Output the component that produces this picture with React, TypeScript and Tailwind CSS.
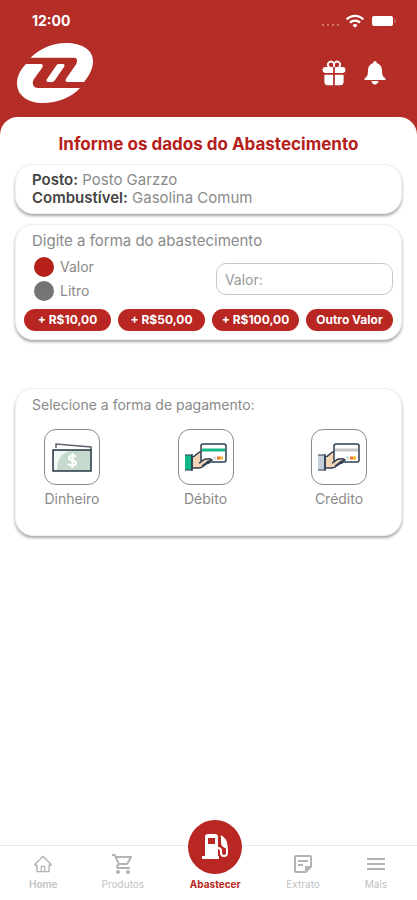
import { useState } from "react";
import { AiOutlineHome } from "react-icons/ai";
import { IoGift } from "react-icons/io5";
import {
  MdMenu,
  MdOutlineShoppingCart,
  MdOutlineStickyNote2,
  MdWifi,
} from "react-icons/md";

const amounts = ["+ R$10,00", "+ R$50,00", "+ R$100,00", "Outro Valor"];

const Logo = () => {
  return (
    <svg viewBox="0 0 76 61" className="h-[61px] w-19" aria-label="Logo" role="img">
      <path
        d="M13.500 15.800C22 7 36 1 49 1c16 0 27 7 27 18 0 8-4 15-9 21H51c-3 0-3-2-1.500-4L59 22.500c2-4 1-6.700-2-6.700Z"
        fill="#fff"
      />
      <path
        d="M9 22h14c3 0 3.500 1.500 2 4l-8 11c-2.500 4-1 9 4 9h42c-8 9-23 15-37 15C10 61 0 53 0 41 0 34 4 27 9 22Z"
        fill="#fff"
      />
      <path
        d="M42 22h4c1.500 0 2 1.500 1 3l-9 13c-1 1.500-2 2-4 2h-3c-1.500 0-2-1.500-1-3l9-13c1-1.500 1.500-2 3-2Z"
        fill="#fff"
      />
    </svg>
  );
};

const StatusBar = () => {
  return (
    <div className="flex h-[42px] items-center justify-between pr-5 pl-8 text-white">
      <span className="text-sm font-bold">12:00</span>
      <div className="flex items-center gap-1">
        <svg viewBox="0 0 20 12" className="h-3 w-5" fill="#d98c88">
          <circle cx="2" cy="10" r="1" />
          <circle cx="7" cy="10" r="1" />
          <circle cx="12" cy="10" r="1" />
          <circle cx="17" cy="10" r="1" />
        </svg>
        <MdWifi className="size-5" />
        <svg viewBox="0 0 26 12" className="h-3 w-7">
          <rect x="2" y="1" width="21" height="10" rx="2" fill="#fff" />
          <path d="M25 4v4" stroke="#d98c88" />
        </svg>
      </div>
    </div>
  );
};

const BellIcon = () => {
  return (
    <svg viewBox="0 0 22 26" className="h-6.5 w-5.5" fill="#fff">
      <path d="M11 1c1 0 1.600.7 1.600 1.900C16.500 4 18 7 18 11c0 4 1 6 3.500 7.500V20H.5v-1.500C3 17 4 15 4 11c0-4 1.500-7 5.400-8.100C9.400 1.700 10 1 11 1Z" />
      <path d="M7.500 21h7c-.4 2-1.700 3.500-3.500 3.500S7.900 23 7.500 21Z" />
    </svg>
  );
};

const CashIcon = () => {
  return (
    <svg viewBox="0 0 42 32" className="h-8 w-[42px]">
      <path d="M5 7V3l35 3v3" fill="#fff" stroke="#59616b" strokeWidth="1.500" />
      <rect x="2" y="9" width="38" height="21" fill="#c5d9cf" />
      <path d="M3 29V10h15C10 13 6 19 6 29Z" fill="#f3f8f5" />
      <rect x="2" y="9" width="38" height="21" fill="none" stroke="#263445" strokeWidth="1.500" />
      <path
        d="M25 16c-1-2-7-2-7 1 0 4 7 1 7 5 0 3-6 3-8 1M21.500 12v15"
        fill="none"
        stroke="#fff"
        strokeWidth="2"
      />
    </svg>
  );
};

const CardIcon = ({ sleeve, stripe }: { sleeve: string; stripe: string }) => {
  return (
    <svg viewBox="0 0 42 32" className="h-8 w-[42px]">
      <path d="M0 14h7v15H0Z" fill={sleeve} />
      <path d="M0 14h7M0 29h7" stroke="#2c3e50" />
      <path
        d="M7 16c4 0 5-6 11-6l7 8-1 4c-4 0-5 5-10 5H7Z"
        fill="#f3d3b5"
        stroke="#2c3e50"
        strokeWidth="1.500"
      />
      <path d="M7 13v17" stroke="#2c3e50" strokeWidth="1.500" />
      <rect x="16" y="3" width="25" height="18" rx="2" fill="#fff" stroke="#2c3e50" strokeWidth="1.500" />
      <path d="M17 9h23" stroke={stripe} strokeWidth="3" />
      <path d="M28 17h3" stroke="#d8dde0" strokeWidth="3" />
      <path d="M32 17h3" stroke="#f0742c" strokeWidth="3" />
      <path d="M35 17h3" stroke="#f5b623" strokeWidth="3" />
      <path
        d="M14 22c3-1 4-4 7-4 2 0 5-1 6 1-2 1-4 1-6 3l-4 3"
        fill="#f3d3b5"
        stroke="#2c3e50"
        strokeWidth="1.500"
      />
    </svg>
  );
};

const PumpIcon = () => {
  return (
    <svg viewBox="0 0 28 28" className="size-7">
      <path
        fill="#fff"
        fillRule="evenodd"
        d="M4 4q0-3 3-3h7q3 0 3 3v19h1v3H1v-3h3Zm3 1v6h7V5Z"
      />
      <path
        d="M17 15q3 0 3 3v2q0 3 3 3t3-3c0-5 0-9-2-13l-4-4"
        fill="none"
        stroke="#fff"
        strokeWidth="2"
      />
      <path d="M20 4l4 4 2 7h-2c-3-1-4-3-4-6Z" fill="#fff" />
    </svg>
  );
};

const payments = [
  { label: "Dinheiro", icon: <CashIcon /> },
  { label: "Débito", icon: <CardIcon sleeve="#12b886" stripe="#12b886" /> },
  { label: "Crédito", icon: <CardIcon sleeve="#c5d0d8" stripe="#c4c8ca" /> },
];

const card = "rounded-[18px] border border-[#f0f0f0] bg-white shadow-[0_2px_3px_rgba(0,0,0,0.35)]";

export default function App() {
  const [mode, setMode] = useState("Valor");

  return (
    <div className="flex min-h-screen flex-col bg-white font-['Inter',sans-serif] text-[#8a8a8a]">
      <header className="bg-[#b42d27] pb-3.5">
        <StatusBar />
        <div className="flex items-center justify-between pr-[31px] pl-[17px]">
          <Logo />
          <div className="flex items-center gap-4">
            <button type="button" aria-label="Presentes" className="text-white">
              <IoGift className="size-7" />
            </button>
            <button type="button" aria-label="Notificações">
              <BellIcon />
            </button>
          </div>
        </div>
      </header>

      <div className="flex flex-1 flex-col bg-[#b42d27]">
        <main className="flex-1 rounded-t-[18px] bg-white px-[15px] pt-[17px]">
          <h1 className="text-center text-[17px] leading-5 font-bold text-[#b5201b]">
            Informe os dados do Abastecimento
          </h1>

          <section className={`${card} mt-2.5 flex flex-col px-4 py-1.5 text-[15px] leading-[18px]`}>
            <p>
              <b className="font-semibold text-[#444]">Posto:</b> Posto Garzzo
            </p>
            <p>
              <b className="font-semibold text-[#444]">Combustível:</b> Gasolina Comum
            </p>
          </section>

          <section className={`${card} mt-2.5 p-2`}>
            <h2 className="px-2 text-[15px] leading-4">Digite a forma do abastecimento</h2>
            <div className="flex items-center justify-between">
              <div className="flex flex-col gap-1 py-2 pl-2.5 text-sm leading-5">
                {["Valor", "Litro"].map((item) => (
                  <label key={item} className="flex items-center gap-1.5">
                    <input
                      type="radio"
                      name="mode"
                      checked={mode === item}
                      onChange={() => setMode(item)}
                      className="size-5 appearance-none rounded-full bg-[#747474] checked:bg-[#b5201b]"
                    />
                    {item}
                  </label>
                ))}
              </div>
              <input
                type="text"
                aria-label="Valor"
                placeholder="Valor:"
                className="h-8 w-[48%] rounded-[10px] border border-[#c8c8c8] px-2 text-sm placeholder:text-[#999]"
              />
            </div>
            <div className="grid grid-cols-4 gap-[7px]">
              {amounts.map((amount) => (
                <button
                  key={amount}
                  type="button"
                  className="h-[22px] rounded-full bg-[#b92722] text-xs font-bold whitespace-nowrap text-white"
                >
                  {amount}
                </button>
              ))}
            </div>
          </section>

          <section className={`${card} mt-12 pt-2 pb-[26px]`}>
            <h2 className="px-4 text-sm leading-4">Selecione a forma de pagamento:</h2>
            <div className="mt-4 flex justify-between pr-[34px] pl-7">
              {payments.map(({ label, icon }) => (
                <button key={label} type="button" className="flex flex-col items-center gap-1">
                  <span className="flex size-14 items-center justify-center rounded-xl border border-[#8a8a8a]">
                    {icon}
                  </span>
                  <span className="text-sm leading-5">{label}</span>
                </button>
              ))}
            </div>
          </section>
        </main>
      </div>

      <nav className="flex items-end justify-between border-t border-[#e8eaea] px-[29px] pb-2.5 text-[10px] leading-3 text-[#c0c2c2]">
        <a href="#home" className="flex flex-col items-center gap-1 font-semibold">
          <AiOutlineHome className="size-5 text-[#b0b4b4]" />
          Home
        </a>
        <a href="#produtos" className="flex flex-col items-center gap-0.5">
          <MdOutlineShoppingCart className="size-6 text-[#b0b4b4]" />
          Produtos
        </a>
        <a href="#abastecer" className="-mt-6.5 flex flex-col items-center gap-1 font-bold text-[#b92722]">
          <span className="flex size-[54px] items-center justify-center rounded-full bg-[#b92722]">
            <PumpIcon />
          </span>
          Abastecer
        </a>
        <a href="#extrato" className="flex flex-col items-center gap-0.5">
          <MdOutlineStickyNote2 className="size-6 text-[#b0b4b4]" />
          Extrato
        </a>
        <a href="#mais" className="flex flex-col items-center gap-0.5">
          <MdMenu className="size-6 text-[#b0b4b4]" />
          Mais
        </a>
      </nav>
    </div>
  );
}
